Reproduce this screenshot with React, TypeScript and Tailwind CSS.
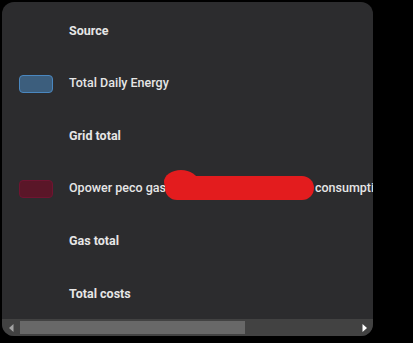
import React from 'react';

type Row = {
  label: string;
  header?: boolean;
  swatch?: 'blue' | 'red';
  redacted?: boolean;
};

const ROWS: Row[] = [
  { label: 'Source', header: true },
  { label: 'Total Daily Energy', swatch: 'blue' },
  { label: 'Grid total', header: true },
  { label: 'Opower peco gas', swatch: 'red', redacted: true },
  { label: 'Gas total', header: true },
  { label: 'Total costs', header: true },
];

const Swatch: React.FC<{ color?: 'blue' | 'red' }> = ({ color }) => {
  if (!color) return null;
  return (
    <div
      className={`w-[34px] h-[18px] rounded-[4px] border ${
        color === 'blue' ? 'bg-[#3c5e7d] border-[#4a87bf]' : 'bg-[#5a1628] border-[#701431]'
      }`}
    />
  );
};

const Redaction = () => (
  <svg className="absolute left-[161px] top-[7px]" width="154" height="32" viewBox="0 0 154 32">
    <ellipse cx="18" cy="13" rx="17" ry="12" fill="#e31c1e" />
    <rect x="2" y="7" width="149" height="24" rx="12" fill="#e31c1e" />
  </svg>
);

const App: React.FC = () => {
  return (
    <div className="w-[413px] h-[343px] bg-black p-[2px] font-['Roboto',_'Liberation_Sans',_sans-serif]">
      <div className="w-[371px] h-[334px] rounded-[12px] bg-[#2c2c2e] overflow-hidden flex flex-col">
        <div className="flex-1 pt-[2.7px] overflow-hidden">
          {ROWS.map(row => (
            <div key={row.label} className="relative h-[52.6px] flex items-center whitespace-nowrap">
              <div className="w-[67px] pl-[17px] flex-shrink-0">
                <Swatch color={row.swatch} />
              </div>
              <span className={`text-[12.5px] text-[#e6e6e6] ${row.header ? 'font-bold' : 'font-medium'}`}>
                {row.label}
                {row.redacted && (
                  <>
                    <span className="inline-block w-[149px]" />
                    consumption
                  </>
                )}
              </span>
              {row.redacted && <Redaction />}
            </div>
          ))}
        </div>

        {/* horizontal scrollbar */}
        <div className="h-[17px] bg-[#424242] flex items-center flex-shrink-0">
          <div className="w-[18px] flex justify-center">
            <svg width="5" height="8" viewBox="0 0 5 8">
              <path d="M4.5 0 L0 4 L4.5 8 Z" fill="#a3a3a3" />
            </svg>
          </div>
          <div className="w-[225px] h-[13px] bg-[#686868]" />
          <div className="flex-1" />
          <div className="w-[18px] flex justify-center">
            <svg width="5" height="8" viewBox="0 0 5 8">
              <path d="M0.5 0 L5 4 L0.5 8 Z" fill="#ffffff" />
            </svg>
          </div>
        </div>
      </div>
    </div>
  );
};

export default App;
